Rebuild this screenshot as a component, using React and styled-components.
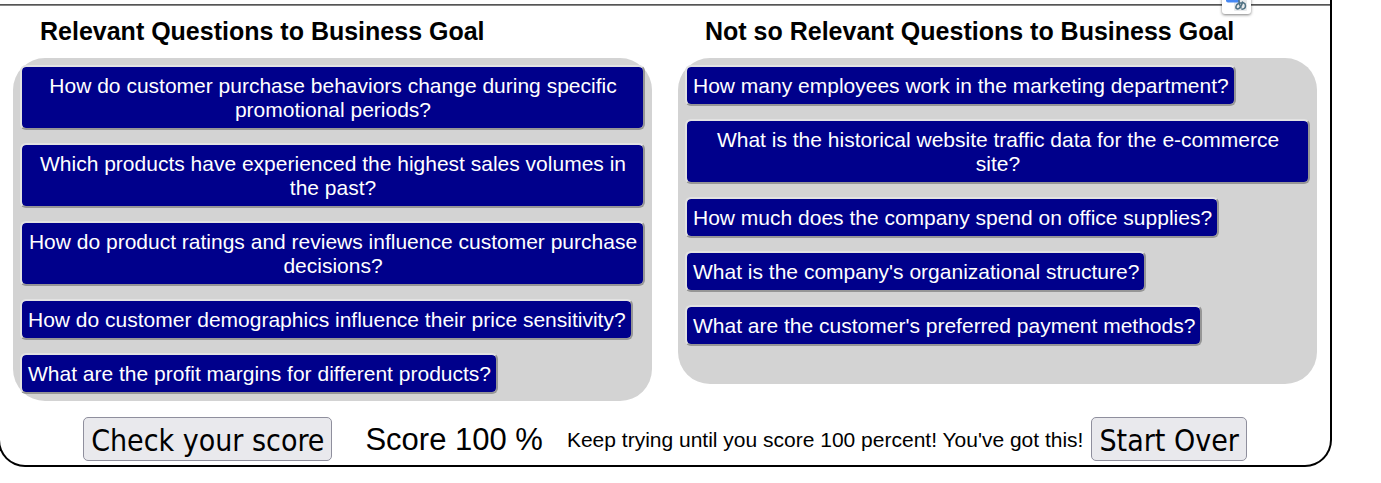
import React from "react";
import styled, { createGlobalStyle } from "styled-components";

const GlobalStyle = createGlobalStyle`
  body {
    margin: 0;
    background: #fff;
    color: #000;
    font-family: "Liberation Sans", Arial, sans-serif;
    overflow-x: hidden;
  }
  *, *::before, *::after { box-sizing: border-box; }
`;

const Activity = styled.main`
  position: relative;
  margin: 0 49px 0 -2px;
  padding: 4px 0;
  border: 2px solid #000;
  border-top: 0;
  border-radius: 0 0 27px 27px;
`;

const Divider = styled.hr`
  margin: 0;
  height: 2px;
  border: 0;
  border-top: 1px solid #555;
  border-bottom: 1px solid #888;
`;

const Columns = styled.div`
  display: grid;
  grid-template-columns: 1fr 1fr;
  align-items: start;
  gap: 26px;
  padding: 0 13px;
`;

const Heading = styled.h2`
  margin: 0;
  padding: 10px 27px 12px;
  font-size: 25px;
  line-height: 30px;
`;

const DropZone = styled.div`
  display: flex;
  flex-direction: column;
  align-items: flex-start;
  gap: 13px;
  min-height: 326px;
  padding: 7px;
  border-radius: 32px;
  background: #d3d3d3;
`;

const Question = styled.button`
  padding: 7px 5px 6px 6px;
  border: 2px solid;
  border-color: #e2e2e2 #969696 #969696 #e2e2e2;
  border-radius: 6px;
  background: #00008b;
  background-clip: padding-box;
  color: #fff;
  font-family: inherit;
  font-size: 21px;
  line-height: 24px;
  text-align: center;
`;

const Footer = styled.footer`
  display: flex;
  justify-content: center;
  align-items: center;
  padding-top: 16px;
`;

const ActionButton = styled.button`
  height: 44px;
  padding: 4px 7px 0;
  border: 1px solid #8f8f9d;
  border-radius: 5px;
  background: #e9e9ed;
  color: #000;
  font-family: "DejaVu Sans Condensed", Tahoma, sans-serif;
  font-size: 30px;
  line-height: 38px;
  white-space: nowrap;
`;

const Score = styled.output`
  padding: 2px 24px 0 33px;
  font-size: 31px;
  line-height: 36px;
  white-space: nowrap;
`;

const Message = styled.p`
  margin: 0;
  padding: 2px 8px 0 0;
  font-size: 21px;
  line-height: 24px;
`;

const TranslateBadge = styled.button`
  position: absolute;
  top: -16px;
  right: 79px;
  width: 29px;
  height: 30px;
  padding: 0;
  border: 0;
  border-radius: 3px;
  background: #fff;
  box-shadow: 0 1px 3px rgba(0, 0, 0, 0.5);
  svg { display: block; }
`;

const groups = [
  {
    title: "Relevant Questions to Business Goal",
    questions: [
      "How do customer purchase behaviors change during specific promotional periods?",
      "Which products have experienced the highest sales volumes in the past?",
      "How do product ratings and reviews influence customer purchase decisions?",
      "How do customer demographics influence their price sensitivity?",
      "What are the profit margins for different products?",
    ],
  },
  {
    title: "Not so Relevant Questions to Business Goal",
    questions: [
      "How many employees work in the marketing department?",
      "What is the historical website traffic data for the e-commerce site?",
      "How much does the company spend on office supplies?",
      "What is the company's organizational structure?",
      "What are the customer's preferred payment methods?",
    ],
  },
];

function TranslateIcon() {
  return (
    <svg width="29" height="30" viewBox="0 0 29 30" aria-hidden="true">
      <rect x="12" y="12" width="13" height="15" rx="1" fill="#e8eaec" />
      <path d="M4 5h12l2 13.500H6a2 2 0 0 1-2-2z" fill="#4688f4" />
      <g fill="none" stroke="#4f7183" strokeWidth="1.500" strokeLinecap="round">
        <path d="M15.500 14.500h7" />
        <path d="M17 13c-.5 4 .3 8 2 11" />
        <path d="M20.500 18c-.7 4-3 7-5 7-2.500-.5-2-4 1-5.500 3.500-1.700 7-.8 7 2.200 0 2-1.500 3.300-3.500 3.500" />
      </g>
    </svg>
  );
}

export default function App() {
  return (
    <>
      <GlobalStyle />
      <Activity>
        <Divider />
        <Columns>
          {groups.map((group) => (
            <section key={group.title}>
              <Heading>{group.title}</Heading>
              <DropZone>
                {group.questions.map((question) => (
                  <Question key={question} type="button">{question}</Question>
                ))}
              </DropZone>
            </section>
          ))}
        </Columns>
        <Footer>
          <ActionButton type="button">Check your score</ActionButton>
          <Score>Score 100 %</Score>
          <Message>Keep trying until you score 100 percent! You've got this!</Message>
          <ActionButton type="button">Start Over</ActionButton>
        </Footer>
        <TranslateBadge type="button" aria-label="Translate">
          <TranslateIcon />
        </TranslateBadge>
      </Activity>
    </>
  );
}
